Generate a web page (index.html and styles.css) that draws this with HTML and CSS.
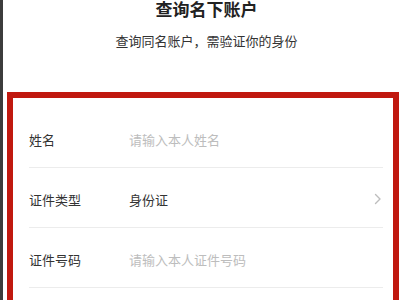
FILE: index.html
```html
<!DOCTYPE html>
<html lang="zh-CN">
<head>
<meta charset="utf-8">
<title>查询名下账户</title>
<link rel="stylesheet" href="styles.css">
</head>
<body>
<div class="page">
  <header class="header">
    <h1 class="title">查询名下账户</h1>
    <p class="subtitle">查询同名账户，需验证你的身份</p>
  </header>
  <section class="form">
    <div class="row">
      <span class="label">姓名</span>
      <span class="value placeholder">请输入本人姓名</span>
    </div>
    <div class="row">
      <span class="label">证件类型</span>
      <span class="value">身份证</span>
      <svg class="chevron" width="8" height="12" viewBox="0 0 8 12"><polyline points="1.5,1.5 6,6 1.5,10.5" fill="none" stroke="#bdbdbd" stroke-width="1.4" stroke-linecap="round" stroke-linejoin="round"/></svg>
    </div>
    <div class="row">
      <span class="label">证件号码</span>
      <span class="value placeholder">请输入本人证件号码</span>
    </div>
  </section>
</div>
</body>
</html>
```
FILE: styles.css
```css
html, body {
  margin: 0;
  padding: 0;
  background: #fff;
}
body {
  font-family: "Noto Sans CJK SC", "Noto Sans", "Liberation Sans", sans-serif;
  color: #333;
}
.page {
  border-left: 3px solid #3c3c3c;
  box-sizing: border-box;
  overflow: hidden;
  height: 300px;
}
.header {
  padding-left: 10px;
  text-align: center;
}
.title {
  margin: 0;
  font-size: 17px;
  line-height: 18px;
  font-weight: 700;
  color: #222;
}
.subtitle {
  margin: 14px 0 0 0;
  font-size: 13px;
  line-height: 18px;
  color: #333;
}
.form {
  margin: 42px 1px 0 4px;
  border: 6px solid #c0180f;
  padding: 10px 10px 20px 16px;
}
.row {
  display: flex;
  align-items: center;
  height: 60px;
  box-sizing: border-box;
  padding-top: 3px;
  border-bottom: 1px solid #ececec;
  font-size: 13px;
}
.label {
  width: 100px;
  flex: none;
  color: #333;
}
.value {
  flex: 1;
  color: #333;
}
.placeholder {
  color: #bdbdbd;
}
.chevron {
  flex: none;
  margin-right: 1px;
}
```
